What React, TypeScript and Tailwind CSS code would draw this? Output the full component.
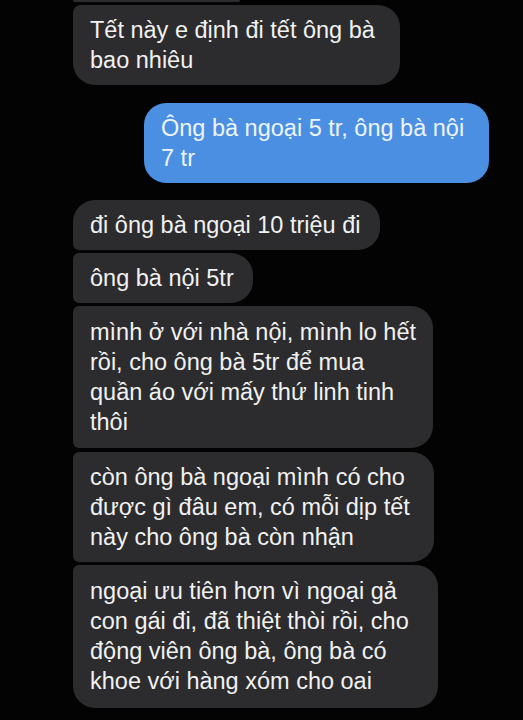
import React from "react"

type Msg = { lines: string[]; w: string; shape: string; mt: string; py: string }

const received: Msg[] = [
  { lines: ["đi ông bà ngoại 10 triệu đi"], w: "w-[307px]", shape: "rounded-tl-[22px] rounded-bl-[6px]", mt: "mt-[17px]", py: "py-[10px]" },
  { lines: ["ông bà nội 5tr"], w: "w-[180px]", shape: "rounded-l-[6px]", mt: "mt-[3px]", py: "py-[10px]" },
  {
    lines: ["mình ở với nhà nội, mình lo hết", "rồi, cho ông bà 5tr để mua", "quần áo với mấy thứ linh tinh", "thôi"],
    w: "w-[360px]",
    shape: "rounded-l-[6px]",
    mt: "mt-[3px]",
    py: "pt-[11px] pb-[11px]",
  },
  {
    lines: ["còn ông bà ngoại mình có cho", "được gì đâu em, có mỗi dịp tết", "này cho ông bà còn nhận"],
    w: "w-[361px]",
    shape: "rounded-l-[6px]",
    mt: "mt-[4px]",
    py: "py-[10px]",
  },
  {
    lines: ["ngoại ưu tiên hơn vì ngoại gả", "con gái đi, đã thiệt thòi rồi, cho", "động viên ông bà, ông bà có", "khoe với hàng xóm cho oai"],
    w: "w-[365px]",
    shape: "rounded-tl-[6px] rounded-bl-[22px]",
    mt: "mt-[3px]",
    py: "pt-[11px] pb-[12px]",
  },
]

function Bubble({ m }: { m: Msg }) {
  return (
    <div className={`${m.mt} ${m.w} ${m.shape} ${m.py} rounded-r-[22px] bg-[#2c2c2e] pl-[17px] pr-3 text-[23.5px] leading-[30px] text-[#f1f1f1]`}>
      {m.lines.map((l, i) => (
        <div key={i} className="whitespace-nowrap">
          {l}
        </div>
      ))}
    </div>
  )
}

export default function App() {
  return (
    <div
      className="w-[523px] h-[720px] overflow-hidden bg-[#030303] pl-[73px]"
      style={{ fontFamily: '"Liberation Sans", Arial, sans-serif' }}
    >
      <div className="flex flex-col items-start">
        <div className="h-[2px] w-[167px] rounded-b-[6px] bg-[#2c2c2e]" />
        <div className="mt-[3px] w-[327px] rounded-[22px] rounded-tl-[8px] bg-[#2c2c2e] py-[10px] pl-[17px] pr-3 text-[23.5px] leading-[30px] text-[#f1f1f1]">
          <div className="whitespace-nowrap">Tết này e định đi tết ông bà</div>
          <div className="whitespace-nowrap">bao nhiêu</div>
        </div>
        <div className="mt-[18px] ml-[71px] w-[345px] rounded-[22px] bg-[#4a8fe2] py-[10px] pl-[17px] pr-3 text-[23.5px] leading-[30px] text-[#eef4fd]">
          <div className="whitespace-nowrap">Ông bà ngoại 5 tr, ông bà nội</div>
          <div className="whitespace-nowrap">7 tr</div>
        </div>
        {received.map((m, i) => (
          <Bubble key={i} m={m} />
        ))}
      </div>
    </div>
  )
}
